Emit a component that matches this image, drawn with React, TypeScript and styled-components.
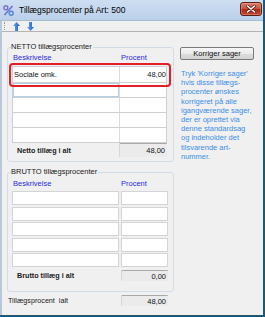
import React from "react";
import styled, { createGlobalStyle } from "styled-components";

const GlobalStyle = createGlobalStyle`
  html, body { margin: 0; padding: 0; background: #ffffff; }
  body { font-family: "Liberation Sans", Arial, sans-serif; }
  *, *::before, *::after { box-sizing: border-box; }
`;

const Window = styled.div`
  width: 265px;
  height: 317px;
  display: flex;
  flex-direction: column;
  background: #f0f0f0;
  border-right: 2px solid #1f5875;
  border-bottom: 2px solid #1f5875;
  overflow: hidden;
`;

const TitleBar = styled.div`
  height: 21px;
  flex: none;
  display: flex;
  align-items: center;
  padding: 0 1px 0 3px;
  background: linear-gradient(#cddef1, #bcd0ea);
  border-bottom: 1px solid #a9bdd6;
`;

const TitleText = styled.span`
  margin-left: 5px;
  font-size: 8.5px;
  color: #000;
  white-space: nowrap;
`;

const CloseButton = styled.div`
  margin-left: auto;
  width: 22px;
  height: 14px;
  margin-top: -3px;
  display: flex;
  align-items: center;
  justify-content: center;
  border: 1px solid #5e1d15;
  border-radius: 3px;
  background: linear-gradient(#d9806c 0%, #c9563f 45%, #a92c17 55%, #c24a30 100%);
  box-shadow: inset 0 0 0 1px rgba(255, 190, 175, 0.35);
`;

const Frame = styled.div`
  flex: 1;
  display: flex;
  flex-direction: column;
  border-left: 2px solid #b8c8da;
`;

const Toolbar = styled.div`
  height: 11px;
  flex: none;
  display: flex;
  align-items: center;
  gap: 6px;
  padding-left: 2px;
  border-bottom: 1px solid #b4b4b4;
`;

const Gripper = styled.div`
  width: 1px;
  height: 8px;
  border-left: 1px dotted #9a9a9a;
  margin-right: 2px;
`;

const ToolButton = styled.div`
  width: 7px;
  height: 9px;
  display: flex;
  margin-right: 1px;
`;

const Body = styled.div`
  flex: 1;
  display: flex;
  gap: 6px;
  padding: 10px 0 0 5px;
`;

const LeftColumn = styled.div`
  width: 167px;
  display: flex;
  flex-direction: column;
`;

const GroupBox = styled.fieldset<{ $gapTop?: number; $padBottom: number }>`
  margin: ${(p) => p.$gapTop ?? 0}px 0 0 0;
  padding: 0 6px ${(p) => p.$padBottom}px 4px;
  min-inline-size: 0;
  border: 1px solid #d3dce4;
  border-radius: 3px;
`;

const Legend = styled.legend`
  padding: 0 1px 0 0;
  margin-left: -1px;
  font-size: 7.5px;
  line-height: 10px;
  color: #1a1a1a;
  white-space: nowrap;
`;

const HeaderRow = styled.div<{ $cols: string; $padTop?: number }>`
  display: grid;
  grid-template-columns: ${(p) => p.$cols};
  height: 10px;
  margin-top: ${(p) => p.$padTop ?? 0}px;
  align-items: center;
  font-size: 7.5px;
  color: #2a2ae0;
`;

const HeaderCell = styled.span<{ $indent: number }>`
  padding-left: ${(p) => p.$indent}px;
  white-space: nowrap;
`;

const NettoTable = styled.div`
  margin-top: 4px;
  display: flex;
  flex-direction: column;
`;

const Highlight = styled.div`
  position: relative;
  &::after {
    content: "";
    position: absolute;
    left: -3px;
    top: -3px;
    right: -4px;
    bottom: -4px;
    border: 2px solid #e41e26;
    border-radius: 4px;
    pointer-events: none;
  }
`;

const NettoRow = styled.div<{ $h: number; $first?: boolean }>`
  display: grid;
  grid-template-columns: 107px 48px;
  height: ${(p) => p.$h}px;
  background: #ffffff;
  border: 1px solid #cfcfcf;
  border-top: ${(p) => (p.$first ? "1px solid #cfcfcf" : "none")};
`;

const NettoCell = styled.div<{ $right?: boolean; $focus?: boolean }>`
  display: flex;
  align-items: center;
  justify-content: ${(p) => (p.$right ? "flex-end" : "flex-start")};
  padding: ${(p) => (p.$right ? "0 2px 0 0" : "0 0 0 1px")};
  font-size: 7.5px;
  color: #111;
  border-right: ${(p) => (p.$right ? "none" : "1px solid #dcdcdc")};
  box-shadow: ${(p) => (p.$focus ? "inset 0 0 0 1px #b5cfe8" : "none")};
`;

const TotalRow = styled.div<{ $cols: string; $gap: number; $h: number; $mt: number; $labelIndent: number }>`
  display: grid;
  grid-template-columns: ${(p) => p.$cols};
  column-gap: ${(p) => p.$gap}px;
  height: ${(p) => p.$h}px;
  margin-top: ${(p) => p.$mt}px;
  align-items: center;
  & > span:first-child {
    padding-left: ${(p) => p.$labelIndent}px;
  }
`;

const TotalLabel = styled.span<{ $bold?: boolean }>`
  font-size: 7.2px;
  font-weight: ${(p) => (p.$bold ? 700 : 400)};
  color: #1a1a1a;
  white-space: nowrap;
`;

const TotalValue = styled.div`
  height: 100%;
  display: flex;
  align-items: center;
  justify-content: flex-end;
  padding-right: 2px;
  font-size: 7.5px;
  color: #111;
  background: #ebebeb;
  border-top: 1px solid #a9a9a9;
  border-left: 1px solid #d6d6d6;
  border-radius: 1px;
`;

const BruttoGrid = styled.div`
  margin-top: 3px;
  display: grid;
  grid-template-columns: 107px 47px;
  grid-auto-rows: 14px;
  column-gap: 2px;
  row-gap: 1.5px;
`;

const BruttoField = styled.div`
  background: #ffffff;
  border: 1px solid #d4d4d4;
`;

const RightColumn = styled.div`
  width: 74px;
  padding-top: 5px;
  display: flex;
  flex-direction: column;
`;

const ActionButton = styled.div`
  height: 13px;
  display: flex;
  align-items: center;
  justify-content: center;
  font-size: 7.5px;
  color: #111;
  border: 1px solid #7a7a7a;
  border-radius: 2px;
  background: linear-gradient(#f6f6f6 0%, #ebebeb 50%, #dddddd 51%, #d2d2d2 100%);
`;

const HelpText = styled.p`
  margin: 9px 0 0 1px;
  font-size: 7.5px;
  line-height: 9.2px;
  color: #3b8fe6;
  white-space: nowrap;
`;

const ArrowIcon = ({ down }: { down?: boolean }) => (
  <svg width="7" height="9" viewBox="0 0 7 9" style={down ? { transform: "scaleY(-1)" } : undefined}>
    <defs>
      <linearGradient id={down ? "ad" : "au"} x1="0" x2="1" y1="0" y2="0">
        <stop offset="0" stopColor="#63a8f2" />
        <stop offset="1" stopColor="#1c5cc6" />
      </linearGradient>
    </defs>
    <path d="M3.5 0 L7 4 H5 V9 H2 V4 H0 Z" fill={`url(#${down ? "ad" : "au"})`} />
  </svg>
);

const TitleIcon = () => (
  <svg width="11" height="11" viewBox="0 0 11 11">
    <circle cx="2.8" cy="2.8" r="2" fill="none" stroke="#7b6fd0" strokeWidth="1.4" />
    <circle cx="8.2" cy="8.2" r="2" fill="none" stroke="#4d86d6" strokeWidth="1.4" />
    <path d="M9.5 1 L1.5 10" stroke="#6a74cf" strokeWidth="1.6" />
  </svg>
);

const CloseIcon = () => (
  <svg width="10" height="8" viewBox="0 0 10 8">
    <path d="M1.5 1 L8.5 7 M8.5 1 L1.5 7" stroke="#5e1d15" strokeWidth="3" strokeLinecap="round" />
    <path d="M1.5 1 L8.5 7 M8.5 1 L1.5 7" stroke="#ffffff" strokeWidth="1.6" strokeLinecap="round" />
  </svg>
);

export default function App() {
  return (
    <>
      <GlobalStyle />
      <Window>
        <TitleBar>
          <TitleIcon />
          <TitleText>Tillægsprocenter på Art: 500</TitleText>
          <CloseButton>
            <CloseIcon />
          </CloseButton>
        </TitleBar>
        <Frame>
          <Toolbar>
            <Gripper />
            <ToolButton>
              <ArrowIcon />
            </ToolButton>
            <ToolButton>
              <ArrowIcon down />
            </ToolButton>
          </Toolbar>
          <Body>
            <LeftColumn>
              <GroupBox $padBottom={4}>
                <Legend>NETTO tillægsprocenter</Legend>
                <HeaderRow $cols="107px 48px">
                  <HeaderCell $indent={1}>Beskrivelse</HeaderCell>
                  <HeaderCell $indent={2}>Procent</HeaderCell>
                </HeaderRow>
                <NettoTable>
                  <Highlight>
                    <NettoRow $h={17} $first>
                      <NettoCell>Sociale omk.</NettoCell>
                      <NettoCell $right>48,00</NettoCell>
                    </NettoRow>
                  </Highlight>
                  <NettoRow $h={15}>
                    <NettoCell $focus />
                    <NettoCell $right />
                  </NettoRow>
                  <NettoRow $h={15}>
                    <NettoCell />
                    <NettoCell $right />
                  </NettoRow>
                  <NettoRow $h={15}>
                    <NettoCell />
                    <NettoCell $right />
                  </NettoRow>
                  <NettoRow $h={15}>
                    <NettoCell />
                    <NettoCell $right />
                  </NettoRow>
                </NettoTable>
                <TotalRow $cols="107px 48px" $gap={0} $h={14} $mt={0} $labelIndent={5}>
                  <TotalLabel $bold>Netto tillæg i alt</TotalLabel>
                  <TotalValue>48,00</TotalValue>
                </TotalRow>
              </GroupBox>

              <GroupBox $gapTop={5} $padBottom={10}>
                <Legend>BRUTTO tillægsprocenter</Legend>
                <HeaderRow $cols="109px 47px" $padTop={1}>
                  <HeaderCell $indent={1}>Beskrivelse</HeaderCell>
                  <HeaderCell $indent={0}>Procent</HeaderCell>
                </HeaderRow>
                <BruttoGrid>
                  {Array.from({ length: 10 }).map((_, i) => (
                    <BruttoField key={i} />
                  ))}
                </BruttoGrid>
                <TotalRow $cols="107px 47px" $gap={2} $h={11} $mt={3} $labelIndent={5}>
                  <TotalLabel $bold>Brutto tillæg i alt</TotalLabel>
                  <TotalValue>0,00</TotalValue>
                </TotalRow>
              </GroupBox>

              <TotalRow $cols="114px 47px" $gap={0} $h={11} $mt={3} $labelIndent={1}>
                <TotalLabel>Tillægsprocent&nbsp; ialt</TotalLabel>
                <TotalValue>48,00</TotalValue>
              </TotalRow>
            </LeftColumn>

            <RightColumn>
              <ActionButton>Korriger sager</ActionButton>
              <HelpText>
                Tryk 'Korriger sager'
                <br />
                hvis disse tillægs-
                <br />
                procenter ønskes
                <br />
                korrigeret på alle
                <br />
                igangværende sager,
                <br />
                der er oprettet via
                <br />
                denne standardsag
                <br />
                og indeholder det
                <br />
                tilsvarende art-
                <br />
                nummer.
              </HelpText>
            </RightColumn>
          </Body>
        </Frame>
      </Window>
    </>
  );
}
